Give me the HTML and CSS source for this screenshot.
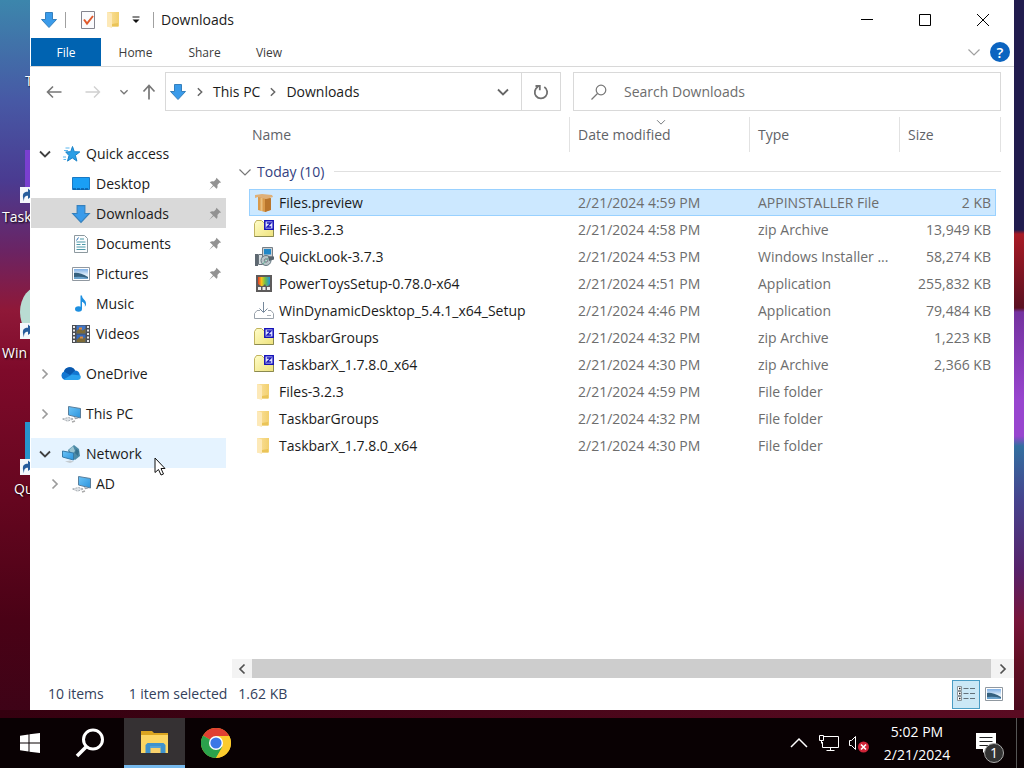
FILE: index.html
```html
<!DOCTYPE html>
<html lang="en">
<head>
<meta charset="utf-8">
<title>Downloads</title>
<link rel="stylesheet" href="styles.css">
</head>
<body>
<svg class="sprite" aria-hidden="true">
  <defs>
    <linearGradient id="g-fold" x1="0" x2="1"><stop offset="0" stop-color="#fbe2a0"/><stop offset="1" stop-color="#f2d06f"/></linearGradient>
    <linearGradient id="g-zip" x1="0" y1="0" x2="1" y2="1"><stop offset="0" stop-color="#fffdc9"/><stop offset="1" stop-color="#eee27c"/></linearGradient>
    <linearGradient id="g-sky" x1="0" y1="0" x2="0" y2="1"><stop offset="0" stop-color="#7fb0e6"/><stop offset=".6" stop-color="#e4f1fb"/></linearGradient>
    <linearGradient id="g-rain" x1="0" x2="1"><stop offset="0" stop-color="#e0382c"/><stop offset=".3" stop-color="#f8c51a"/><stop offset=".6" stop-color="#6fc04a"/><stop offset="1" stop-color="#1e8fe0"/></linearGradient>
    <linearGradient id="g-scr" x1="0" y1="0" x2="1" y2="1"><stop offset="0" stop-color="#6cc4f7"/><stop offset="1" stop-color="#2b93dc"/></linearGradient>
  </defs>
  <symbol id="down" viewBox="0 0 18 18"><path d="M5.500 1.500h7v7h4L9 16.500 1.500 8.500h4z" fill="#3a9bea" stroke="#3580bd"/></symbol>
  <symbol id="chev-d" viewBox="0 0 14 14"><path d="M2 4.500l5 5 5-5" fill="none" stroke="currentColor" stroke-width="1.800"/></symbol>
  <symbol id="chev-thin" viewBox="0 0 14 14"><path d="M1.500 4.500L7 10l5.500-5.500" fill="none" stroke="currentColor" stroke-width="1.200"/></symbol>
  <symbol id="chev-r" viewBox="0 0 14 14"><path d="M4.500 2.500L9 7l-4.500 4.500" fill="none" stroke="currentColor" stroke-width="1.700"/></symbol>
  <symbol id="pin" viewBox="0 0 14 14"><path d="M8.500.8l4.700 4.700-1.800.2-2 2.200c.4 1.700.1 3-.9 3.900L5.700 9 1 13l4-4.700-3.200-3c1-.9 2.300-1.200 4-.9l2-2z" fill="#929292"/></symbol>
  <symbol id="folder" viewBox="0 0 20 20"><path d="M3 2h12v14.500H3z" fill="url(#g-fold)"/><path d="M3 2l5 1.500V18l-5-1.500z" fill="#fde9b8"/><path d="M8 14l6-1v3.500H8z" fill="#eac458"/></symbol>
  <symbol id="zip" viewBox="0 0 20 20"><path d="M.5 16V3.500l2-3h5l2 2h10V16.500H.5z" fill="url(#g-zip)" stroke="#c0b35e"/><path d="M.5 16.500h19V8" fill="none" stroke="#8b8a50"/><path d="M10.800.8h8.400v8.400h-8.400z" fill="#dfe2ff" stroke="#1411b8" stroke-width="1.500"/><path d="M12.800 3h4.200l-4 4h4.200" fill="none" stroke="#1b18b8" stroke-width="1.300"/></symbol>
  <symbol id="picture" viewBox="0 0 20 20"><path d="M1.500 3.500h17v13h-17z" fill="#fff" stroke="#9098a0"/><path d="M3 5h14v10H3z" fill="url(#g-sky)"/><path d="M3 9q5-1 14 4v2H3z" fill="#35617f"/><path d="M3 13q7-1 14 1v1H3z" fill="#6aa2cc"/></symbol>
  <symbol id="pc" viewBox="0 0 20 20"><path d="M7.500 2.500l12 2v9.500L7.500 11z" fill="url(#g-scr)" stroke="#597e9c"/><path d="M13 13l5 1.500-4 .8z" fill="#9aa3ab"/><path d="M1.500 15l6-1.500 5 1.500-6 2.200z" fill="#dfe2e5" stroke="#a7adb3" stroke-dasharray="2 1"/><path d="M11 18l3-1" stroke="#aaa" stroke-width="1.500"/></symbol>
  <symbol id="shortcut" viewBox="0 0 20 20"><path d="M0 0h20v20H0z" fill="#f5f7fb"/><path d="M5 18C2 9 4 6 10 6V2l8 7-8 6v-4c-4 0-5 2-5 7z" fill="#275c9c"/></symbol>
</svg>

<div class="screen">
  <main class="desktop">
    <div class="shortcuts">
      <div class="shortcut t1"><span>T</span></div>
      <div class="shortcut t2"><i class="tile"></i><svg><use href="#shortcut"/></svg><span>Taskbar</span></div>
      <div class="shortcut t3"><i class="tile"></i><svg><use href="#shortcut"/></svg><span>Win</span></div>
      <div class="shortcut t4"><i class="tile"></i><svg><use href="#shortcut"/></svg><span>QuickL</span></div>
    </div>

    <section class="window">
      <header class="titlebar">
        <svg class="ic18"><use href="#down"/></svg>
        <i class="sep"></i>
        <button class="qa check" aria-label="Properties"><svg class="ic20" viewBox="0 0 20 20"><path d="M3.500 1.500h13v17h-13z" fill="#fbfbfd" stroke="#85858f"/><path d="M6 9.500l3 4 6-7.500" fill="none" stroke="#e0592b" stroke-width="2"/></svg></button>
        <button class="qa" aria-label="New folder"><svg class="ic20"><use href="#folder"/></svg></button>
        <button class="qa more" aria-label="Customize"><svg width="8" height="8" viewBox="0 0 8 8"><path d="M.5 1h7" stroke="#111"/><path d="M.5 3.500h7L4 7z" fill="#111"/></svg></button>
        <i class="sep"></i>
        <h1>Downloads</h1>
        <div class="caption">
          <button aria-label="Minimize"><svg viewBox="0 0 14 14"><path d="M1 6.500h12" stroke="#000"/></svg></button>
          <button aria-label="Maximize"><svg viewBox="0 0 14 14"><path d="M1.500 1.500h11v11h-11z" fill="none" stroke="#000"/></svg></button>
          <button aria-label="Close"><svg viewBox="0 0 14 14"><path d="M1 1l12 12M13 1L1 13" stroke="#000"/></svg></button>
        </div>
      </header>

      <nav class="ribbon">
        <button class="tab file">File</button>
        <button class="tab">Home</button>
        <button class="tab">Share</button>
        <button class="tab">View</button>
        <button class="expand" aria-label="Expand the ribbon"><svg class="ic14"><use href="#chev-thin"/></svg></button>
        <button class="help" aria-label="Help">?</button>
      </nav>

      <div class="toolbar">
        <div class="history">
          <button class="back" aria-label="Back"><svg viewBox="0 0 16 16"><path d="M15.500 8H1.500M7 2.500L1.500 8 7 13.500" fill="none" stroke="#777" stroke-width="1.600"/></svg></button>
          <button class="fwd" aria-label="Forward"><svg viewBox="0 0 16 16"><path d="M.5 8h14M9 2.500L14.500 8 9 13.500" fill="none" stroke="#d0d0d0" stroke-width="1.400"/></svg></button>
          <button class="recent" aria-label="Recent locations"><svg viewBox="0 0 14 14"><use href="#chev-d"/></svg></button>
          <button class="up" aria-label="Up"><svg viewBox="0 0 16 16"><path d="M8 15.500v-14M2.500 7.500L8 1.500l5.500 6" fill="none" stroke="#777" stroke-width="1.700"/></svg></button>
        </div>
        <div class="address">
          <svg class="ic18"><use href="#down"/></svg>
          <svg class="crumb-sep"><use href="#chev-r"/></svg>
          <button>This PC</button>
          <svg class="crumb-sep"><use href="#chev-r"/></svg>
          <button>Downloads</button>
          <button class="drop" aria-label="Previous locations"><svg class="ic14"><use href="#chev-d"/></svg></button>
          <button class="refresh" aria-label="Refresh"><svg class="ic18" viewBox="0 0 18 18"><path d="M12.300 4A6.200 6.200 0 1 1 6 3.800" fill="none" stroke="#707070" stroke-width="1.800"/><path d="M3.500 3h4.300v4.300" fill="none" stroke="#707070" stroke-width="1.800"/></svg></button>
        </div>
        <label class="search">
          <svg class="ic18" viewBox="0 0 18 18"><circle cx="11" cy="7" r="4.800" fill="none" stroke="#777" stroke-width="1.200"/><path d="M7.500 10.500L1.500 16.500" stroke="#777" stroke-width="1.200"/></svg>
          <input type="search" placeholder="Search Downloads" aria-label="Search Downloads">
        </label>
      </div>

      <div class="body">
        <nav class="tree">
          <a class="node" href="#"><svg class="arrow open"><use href="#chev-d"/></svg><svg class="ic20" viewBox="0 0 20 20"><path d="M11.500 2.500l1.800 5.200 5.500.2-4.400 3.500 1.500 5.700-4.600-3.200-4.800 3.200 1.500-5.500-3.300-3.700 5-.2z" fill="#2c9fe6" stroke="#1c83c8"/><path d="M4.500 4h4M3 6.500h4M2 13h3M2.500 15.500h2.500" stroke="#5bb6ee"/></svg><span>Quick access</span></a>
          <a class="node child" href="#"><svg class="arrow"></svg><svg class="ic20" viewBox="0 0 20 20"><path d="M1.500 3.500h17v12h-17z" fill="#1a9ff5" stroke="#1979c4"/><path d="M2 15h16" stroke="#0a5ea5" stroke-width="1.500" stroke-dasharray="3 1"/></svg><span>Desktop</span><svg class="pin"><use href="#pin"/></svg></a>
          <a class="node child current" href="#"><svg class="arrow"></svg><svg class="ic20"><use href="#down"/></svg><span>Downloads</span><svg class="pin"><use href="#pin"/></svg></a>
          <a class="node child" href="#"><svg class="arrow"></svg><svg class="ic20" viewBox="0 0 20 20"><path d="M3.500 1.500h10l3 3v14h-13z" fill="#fbfdfe" stroke="#8d999f"/><path d="M9 5h4M5.500 8h9M5.500 10.500h4M5.500 13h9M5.500 15.500h9M11 10.500h3.500" stroke="#4c98a8"/><path d="M5.500 6.500l2-3" stroke="#2a6fb5"/></svg><span>Documents</span><svg class="pin"><use href="#pin"/></svg></a>
          <a class="node child" href="#"><svg class="arrow"></svg><svg class="ic20"><use href="#picture"/></svg><span>Pictures</span><svg class="pin"><use href="#pin"/></svg></a>
          <a class="node child" href="#"><svg class="arrow"></svg><svg class="ic20" viewBox="0 0 20 20"><ellipse cx="7.500" cy="15" rx="3.500" ry="2.700" fill="#1d8fe0"/><path d="M9.500 15V1.500h1.500c0 4 4.500 4 4 9-.2 1-.6 1.700-1.200 2.200.8-3-1-4.200-2.800-5V15z" fill="#1d8fe0"/></svg><span>Music</span></a>
          <a class="node child" href="#"><svg class="arrow"></svg><svg class="ic20" viewBox="0 0 20 20"><path d="M1 1h18v18H1z" fill="#4b4d52"/><path d="M3 2v16M17 2v16" stroke="#e8eaed" stroke-width="2" stroke-dasharray="2 1.500"/><path d="M5.500 1.500h9v8h-9z" fill="#4176c8"/><path d="M5.500 10.500h9v8h-9z" fill="#3569bd"/><path d="M5.500 7l3-2.500 3 2 3-2v5h-9zM5.500 16l3-3 3 2 3-2v5.500h-9z" fill="#7d6a37"/><path d="M8 3.500h3v2H8zM9 12.500h3v2H9z" fill="#df8b3a"/></svg><span>Videos</span></a>
          <a class="node root" href="#"><svg class="arrow"><use href="#chev-r"/></svg><svg class="ic20" viewBox="0 0 20 20"><path d="M4.500 16A4.500 4.500 0 0 1 3 7.500 6 6 0 0 1 14 6.500a5 5 0 0 1 2 9.500z" fill="#1377d1"/><path d="M3 7.500A6 6 0 0 1 14 6.500L9 11z" fill="#0a58ad"/><path d="M2.500 15.500L11 10.500l8.500 1c1 2.500-.5 4.500-3 4.500h-12z" fill="#2ba2ee"/></svg><span>OneDrive</span></a>
          <a class="node root" href="#"><svg class="arrow"><use href="#chev-r"/></svg><svg class="ic20"><use href="#pc"/></svg><span>This PC</span></a>
          <a class="node root hover" href="#"><svg class="arrow open"><use href="#chev-d"/></svg><svg class="ic20" viewBox="0 0 20 20"><path d="M7 6l6-5 5 4 1 7-5 4-5-3z" fill="#4d8ba7"/><path d="M12 2l2 5-3 3-3-4z" fill="#9cc5d2"/><path d="M15 5l3 2-1 5-3-3z" fill="#37728f"/><path d="M1.500 7l11 2v7l-11-3z" fill="url(#g-scr)" stroke="#367ba9"/><path d="M4 17.500l5-1 4 1-4 1.500z" fill="#c4cbd1"/></svg><span>Network</span></a>
          <a class="node child" href="#"><svg class="arrow"><use href="#chev-r"/></svg><svg class="ic20"><use href="#pc"/></svg><span>AD</span></a>
        </nav>

        <div class="content">
          <table class="files">
            <colgroup><col class="c-lead"><col><col class="c-date"><col class="c-type"><col class="c-size"><col class="c-end"></colgroup>
            <thead>
              <tr><td></td><th scope="col">Name</th><th scope="col" class="sorted"><svg viewBox="0 0 14 14"><use href="#chev-thin"/></svg>Date modified</th><th scope="col">Type</th><th scope="col" colspan="2">Size</th></tr>
            </thead>
            <tbody>
              <tr><th colspan="6" scope="rowgroup" class="group"><div><svg class="ic14"><use href="#chev-thin"/></svg>Today (10)<i></i></div></th></tr>
              <tr class="selected"><td></td><td class="name"><div><svg class="ic20" viewBox="0 0 20 20"><path d="M4 4h12v13l-5 2-7-2z" fill="#d9994a"/><path d="M11 6l6-1v12l-6 2z" fill="#b9752c"/><path d="M1 2l7-1 10 1 1 2-7 2-8-2-3 1z" fill="#dfb078"/><path d="M7.500 5v13" stroke="#eac080" stroke-width="2"/></svg>Files.preview</div></td><td>2/21/2024 4:59 PM</td><td>APPINSTALLER File</td><td class="size">2 KB</td><td></td></tr>
              <tr><td></td><td class="name"><div><svg class="ic20"><use href="#zip"/></svg>Files-3.2.3</div></td><td>2/21/2024 4:58 PM</td><td>zip Archive</td><td class="size">13,949 KB</td><td></td></tr>
              <tr><td></td><td class="name"><div><svg class="ic20" viewBox="0 0 20 20"><path d="M8.500.5h10v9.500H8.500z" fill="#c9cfd3" stroke="#777f86"/><path d="M10 2h7v5.500H10z" fill="#2187c6"/><path d="M1 7h3v12H1z" fill="#5e6871"/><path d="M4.500 7.500h4v10h-4z" fill="#d7dde0" stroke="#68737b"/><circle cx="12" cy="13.500" r="5" fill="#b8c5c8" stroke="#657780"/><circle cx="12" cy="13.500" r="1.600" fill="#fff" stroke="#667"/><path d="M14 9.500h6v3L15 14z" fill="#56636d"/><path d="M9 17l5-6" stroke="#67b79c"/></svg>QuickLook-3.7.3</div></td><td>2/21/2024 4:53 PM</td><td>Windows Installer ...</td><td class="size">58,274 KB</td><td></td></tr>
              <tr><td></td><td class="name"><div><svg class="ic20" viewBox="0 0 20 20"><path d="M2 1h16v17H2z" fill="#5d5b5b"/><path d="M4 3h12v7l-2 2h-2l-1-2-2 2H7l-3-2z" fill="url(#g-rain)"/><path d="M4 13h3v3H4zM8.500 13h3v3h-3zM13 13h3v3h-3z" fill="#eee"/></svg>PowerToysSetup-0.78.0-x64</div></td><td>2/21/2024 4:51 PM</td><td>Application</td><td class="size">255,832 KB</td><td></td></tr>
              <tr><td></td><td class="name"><div><svg class="ic20" viewBox="0 0 20 20"><path d="M6 9.500H3l-2.500 3v5h19v-5l-2.500-3h-3" fill="none" stroke="#98a1aa"/><path d="M9.500 1v10M5.500 7.500l4 4 4-4" fill="none" stroke="#76889b"/><path d="M13 14.500h4" stroke="#a9b0b7"/></svg>WinDynamicDesktop_5.4.1_x64_Setup</div></td><td>2/21/2024 4:46 PM</td><td>Application</td><td class="size">79,484 KB</td><td></td></tr>
              <tr><td></td><td class="name"><div><svg class="ic20"><use href="#zip"/></svg>TaskbarGroups</div></td><td>2/21/2024 4:32 PM</td><td>zip Archive</td><td class="size">1,223 KB</td><td></td></tr>
              <tr><td></td><td class="name"><div><svg class="ic20"><use href="#zip"/></svg>TaskbarX_1.7.8.0_x64</div></td><td>2/21/2024 4:30 PM</td><td>zip Archive</td><td class="size">2,366 KB</td><td></td></tr>
              <tr><td></td><td class="name"><div><svg class="ic20"><use href="#folder"/></svg>Files-3.2.3</div></td><td>2/21/2024 4:59 PM</td><td>File folder</td><td></td><td></td></tr>
              <tr><td></td><td class="name"><div><svg class="ic20"><use href="#folder"/></svg>TaskbarGroups</div></td><td>2/21/2024 4:32 PM</td><td>File folder</td><td></td><td></td></tr>
              <tr><td></td><td class="name"><div><svg class="ic20"><use href="#folder"/></svg>TaskbarX_1.7.8.0_x64</div></td><td>2/21/2024 4:30 PM</td><td>File folder</td><td></td><td></td></tr>
            </tbody>
          </table>
          <div class="hscroll">
            <button aria-label="Scroll left"><svg class="ic14 flip"><use href="#chev-r"/></svg></button>
            <div class="thumb"></div>
            <button aria-label="Scroll right"><svg class="ic14"><use href="#chev-r"/></svg></button>
          </div>
        </div>
      </div>

      <footer class="status">
        <span class="count">10 items</span><span class="picked">1 item selected</span><span>1.62 KB</span>
        <div class="views">
          <button class="on" aria-label="Details view"><svg class="ic20" viewBox="0 0 20 20"><path d="M1.500 2.500h4v4h-4zM1.500 7.500h4v4h-4zM1.500 12.500h4v4h-4z" fill="#fff" stroke="#8a949a"/><path d="M3 4.500h1.500M3 9.500h1.500M3 14.500h1.500" stroke="#222" stroke-width="1.500"/><path d="M7.500 4.500h5M14 4.500h5M7.500 9.500h5M14 9.500h5M7.500 14.500h5M14 14.500h5" stroke="#63717a"/></svg></button>
          <button aria-label="Large icons view"><svg class="ic20"><use href="#picture"/></svg></button>
        </div>
      </footer>
      <svg class="cursor" viewBox="0 0 12 19"><path d="M1 1v14.500l3.500-3 2.500 5.500 2.500-1-2.500-5.500H11z" fill="#fff" stroke="#111"/></svg>
    </section>
  </main>

  <footer class="taskbar">
    <button class="task" aria-label="Start"><svg class="ic20" viewBox="0 0 20 20"><path d="M0 2.800L8.500 1.500V9.500H0zM9.500 1.300L20 0v9.500H9.500zM0 10.500h8.500v8L0 17.300zM9.500 10.500H20V20L9.500 18.700z" fill="#fff"/></svg></button>
    <button class="task" aria-label="Search"><svg class="ic30" viewBox="0 0 30 30"><circle cx="18" cy="11.500" r="9.500" fill="none" stroke="#fff" stroke-width="3"/><path d="M11.500 18.500L2 28" stroke="#fff" stroke-width="3.500"/></svg></button>
    <button class="task active" aria-label="File Explorer"><svg class="ic30" viewBox="0 0 30 30"><path d="M1 4h11l2 2h14v7H1z" fill="#dba520"/><path d="M1 8h27v18H1z" fill="#fcd663"/><path d="M5.500 26V18l2-2h16l2 2v8h-5v-5h-10v5z" fill="#3f92cd"/><path d="M11 21h9v5h-9z" fill="#f9d16c"/><path d="M10 20h11" stroke="#6cb3e2"/></svg></button>
    <button class="task" aria-label="Chrome"><svg class="ic30" viewBox="0 0 30 30"><circle cx="15" cy="15" r="15" fill="#f9c51f"/><path d="M15 15L2 7.500a15 15 0 0 1 26 0z" fill="#e03f32"/><path d="M2 7.500A15 15 0 0 0 15 30l6.500-11.500L15 15z" fill="#2ba24c"/><path d="M15 8h13.300A15 15 0 0 1 15 30l6.500-11z" fill="#fccb2d"/><circle cx="15" cy="15" r="7" fill="#fff"/><circle cx="15" cy="15" r="5.600" fill="#3b78e7"/></svg></button>
    <div class="tray">
      <button aria-label="Show hidden icons"><svg viewBox="0 0 20 20"><path d="M2 14l8-8 8 8" fill="none" stroke="#fff" stroke-width="1.500"/></svg></button>
      <button aria-label="Network"><svg viewBox="0 0 20 20"><path d="M5 3.500h14.500v11H3.500V9M11.500 14.500v3M7.500 17.500h8M.5 2.500h4v5h-4zM2.500 7.500v3" fill="none" stroke="#fff"/></svg></button>
      <button aria-label="Volume muted"><svg viewBox="0 0 20 20"><path d="M.5 7.500h2l4-4v13l-4-4h-2z" fill="none" stroke="#fff"/><circle cx="14.500" cy="14" r="5.500" fill="#cf2438"/><path d="M12 11.500l5 5M17 11.500l-5 5" stroke="#fff" stroke-width="1.600"/></svg></button>
      <time class="clock"><span>5:02 PM</span><span>2/21/2024</span></time>
      <button class="notes" aria-label="Notifications"><svg class="ic30" viewBox="0 0 30 30"><path d="M3 5h20v16h-9l-4 4v-4H3z" fill="#fff"/><path d="M6.500 9.500h13M6.500 13.500h13M6.500 17.500h9" stroke="#222"/></svg><span class="badge">1</span></button>
      <i class="peek"></i>
    </div>
  </footer>
</div>
</body>
</html>
```

FILE: styles.css
```css
* { box-sizing: border-box; }
body { margin: 0; font: 14px/20px "Open Sans", "Noto Sans", sans-serif; color: #1b1b1b; }
button { border: 0; padding: 0; background: none; font: inherit; color: inherit; display: flex; align-items: center; justify-content: center; }
svg { flex: none; display: block; }
.sprite { position: absolute; width: 0; height: 0; }
.ic14 { width: 14px; height: 14px; }
.ic18 { width: 18px; height: 18px; }
.ic20 { width: 20px; height: 20px; }
.ic30 { width: 30px; height: 30px; }

.screen { height: 100vh; display: flex; flex-direction: column; overflow: hidden; }
.desktop {
  flex: 1; min-height: 0; position: relative; display: flex; padding: 0 10px 8px 30px;
  background:
    linear-gradient(90deg, #34000f, #5a0b22) bottom / 100% 8px no-repeat,
    linear-gradient(180deg, #211c4e 0 230px, #a81a25 234px, #5a1021 308px, #74329f 312px, #9845cf 400px 436px, #336fa0 446px, #46438e 500px, #57226b 570px, #78153b 620px, #620f24 660px, #4a0a1d 710px) right / 40px 100% no-repeat,
    linear-gradient(180deg, #3c86ac 0, #4759a5 100px, #4a3b91 180px, #6a2464 250px, #8f1838 310px, #7e0a2a 370px, #65061f 500px, #4a0216 620px, #3d0317 100%);
}

.shortcut { position: absolute; width: 70px; color: #fff; text-shadow: 1px 1px 2px #000; }
.shortcut svg { position: absolute; width: 16px; height: 16px; left: 20px; top: 37px; }
.shortcut .tile { position: absolute; left: 25px; top: 0; width: 40px; height: 52px; }
.shortcut span { position: absolute; top: 57px; }
.t1 { left: 25px; top: 14px; }
.t2 { left: 0; top: 150px; }
.t2 .tile { background: #7a3fd0; }
.t2 span { left: 2px; }
.t3 { left: 0; top: 286px; }
.t3 .tile { left: 20px; border-radius: 50%; background: #b9dcd2; }
.t3 span { left: 2px; }
.t4 { left: 0; top: 422px; }
.t4 .tile { background: #2794cb; }
.t4 span { left: 14px; }

.window { flex: 1; min-width: 0; position: relative; display: flex; flex-direction: column; background: #fff; }

.titlebar { height: 38px; flex: none; display: flex; align-items: center; padding: 1px 0 0 10px; }
.titlebar h1 { margin: 0 0 0 7px; font-size: 14px; font-weight: 400; }
.sep { width: 1px; height: 16px; background: #a0a0a0; margin-left: 7px; }
.qa { margin-left: 6px; }
.qa.check { margin-left: 12px; }
.qa.more { margin: 0 6px 0 8px; }
.caption { margin-left: auto; display: flex; align-self: stretch; }
.caption button { width: 58px; }
.caption svg { width: 14px; height: 14px; }
.caption button:last-child { margin-right: 2px; }

.ribbon { height: 29px; flex: none; display: flex; border-bottom: 1px solid #d8d8d8; font-size: 12px; color: #3c3c3c; padding-left: 1px; }
.tab { width: 69px; padding-top: 1px; }
.tab:nth-child(4) { width: 60px; }
.tab.file { width: 70px; background: #0063b1; color: #fff; }
.expand { margin-left: auto; margin-right: 9px; color: #a0a0a0; }
.help { width: 20px; height: 20px; margin: 4px 4px 0 0; border-radius: 50%; background: #0b64c0; color: #fff; font-size: 15px; font-weight: 600; }

.toolbar { flex: none; display: flex; padding: 5px 13px 6px 0; }
.history { width: 135px; flex: none; display: flex; align-items: center; padding-left: 16px; }
.history svg { width: 16px; height: 16px; }
.history .fwd { margin-left: 23px; }
.history .recent { margin: 0 12px 0 18px; color: #777; }
.history .recent svg { width: 10px; height: 10px; }
.address { width: 396px; height: 39px; display: flex; align-items: center; border: 1px solid #d9d9d9; padding-left: 3px; }
.crumb-sep { width: 12px; height: 12px; margin: 0 7px; color: #666; }
.drop { margin-left: auto; margin-right: 11px; color: #666; }
.refresh { width: 39px; align-self: stretch; border-left: 1px solid #d9d9d9; }
.search { flex: 1; height: 39px; margin-left: 12px; display: flex; align-items: center; gap: 16px; padding-left: 16px; border: 1px solid #d9d9d9; }
.search input { flex: 1; min-width: 0; border: 0; outline: 0; padding: 0; background: none; font: inherit; color: #444; }
.search input::placeholder { color: #6d6d6d; opacity: 1; }

.body { flex: 1; min-height: 0; display: flex; }
.tree { width: 196px; flex: none; padding: 21px 0 0 1px; margin-right: 6px; }
.node { height: 30px; display: flex; align-items: center; padding: 1px 4px 0 7px; color: #1b1b1b; text-decoration: none; }
.node span { margin-left: 5px; }
.node .arrow { width: 14px; height: 14px; margin-right: 9px; color: #9c9c9c; }
.node .open { color: #404040; }
.node.child { padding-left: 17px; }
.root { margin-top: 10px; }
.current { background: #d9d9d9; }
.hover { background: #e5f3ff; }
.pin { width: 14px; height: 14px; margin-left: auto; }

.content { flex: 1; min-width: 0; display: flex; flex-direction: column; }
.files { table-layout: fixed; border-spacing: 0; width: auto; margin: 0 13px auto 6px; color: #6d6d6d; }
.c-lead { width: 11px; }
.c-date { width: 180px; }
.c-type { width: 150px; }
.c-size { width: 96px; }
.c-end { width: 5px; }
.files th { font-weight: 400; text-align: left; }
.files td { padding: 0; height: 27px; white-space: nowrap; border: 0 solid #99d1ff; }
.files td:nth-child(n+3) { padding-left: 8px; }
.files .size { text-align: right; padding: 0 5px 0 0; }
.files td:last-child { padding: 0; }
.files thead th { height: 35px; padding: 0 0 0 8px; border-right: 1px solid #e2e2e2; color: #5f6368; }
.files thead th:nth-child(2) { padding-left: 3px; }
.sorted { position: relative; }
.sorted svg { position: absolute; left: 86px; top: 0; width: 10px; height: 10px; }
.group { height: 37px; padding: 2px 0 0; color: #33417f; }
.group div { display: flex; align-items: center; }
.group svg { color: #777; margin-right: 5px; }
.group i { flex: 1; height: 1px; margin-left: 10px; background: #e0e0e0; }
.name div { display: flex; align-items: center; gap: 5px; padding-left: 5px; color: #1b1b1b; }
.selected td:nth-child(n+2):nth-child(-n+5) { background: #cce8ff; border-width: 1px 0; }
.files .selected td:nth-child(2) { border-left-width: 1px; }
.files .selected .name div { padding-left: 4px; }
.files .selected td:nth-child(5) { border-right-width: 1px; padding-right: 4px; }

.hscroll { height: 20px; flex: none; display: flex; padding-bottom: 1px; background: #fff; }
.hscroll button { width: 20px; background: #f3f3f3; color: #505050; }
.hscroll button:last-child { width: 23px; }
.flip { transform: scaleX(-1); }
.thumb { flex: 1; background: #cdcdcd; }

.status { height: 31px; flex: none; display: flex; align-items: center; padding: 0 10px 1px 18px; color: #33415c; }
.count { margin-right: 25px; }
.picked { margin-right: 11px; }
.views { margin-left: auto; display: flex; gap: 4px; }
.views button { height: 29px; }
.views .on { width: 28px; background: #cbe8f6; border: 1px solid #4a9cc4; }

.cursor { position: absolute; left: 124px; top: 457px; width: 12px; height: 19px; }

.taskbar { height: 50px; flex: none; display: flex; background: #090103; color: #fff; }
.task { width: 60px; }
.task.active { width: 61px; margin-left: 4px; background: #353133; border-bottom: 3px solid #76b9ed; }
.task:nth-child(4) { width: 61px; }
.tray { margin-left: auto; display: flex; align-items: stretch; }
.tray button { width: 30px; }
.tray button > svg:not(.ic30) { width: 20px; height: 20px; }
.clock { width: 86px; display: flex; flex-direction: column; align-items: center; justify-content: center; line-height: 23px; }
.tray .notes { width: 56px; position: relative; }
.badge { position: absolute; left: 24px; top: 25px; width: 20px; height: 20px; border: 1px solid #aaa; border-radius: 50%; background: #333; line-height: 18px; }
.peek { width: 7px; margin-right: 1px; border-left: 1px solid #555; }
```
